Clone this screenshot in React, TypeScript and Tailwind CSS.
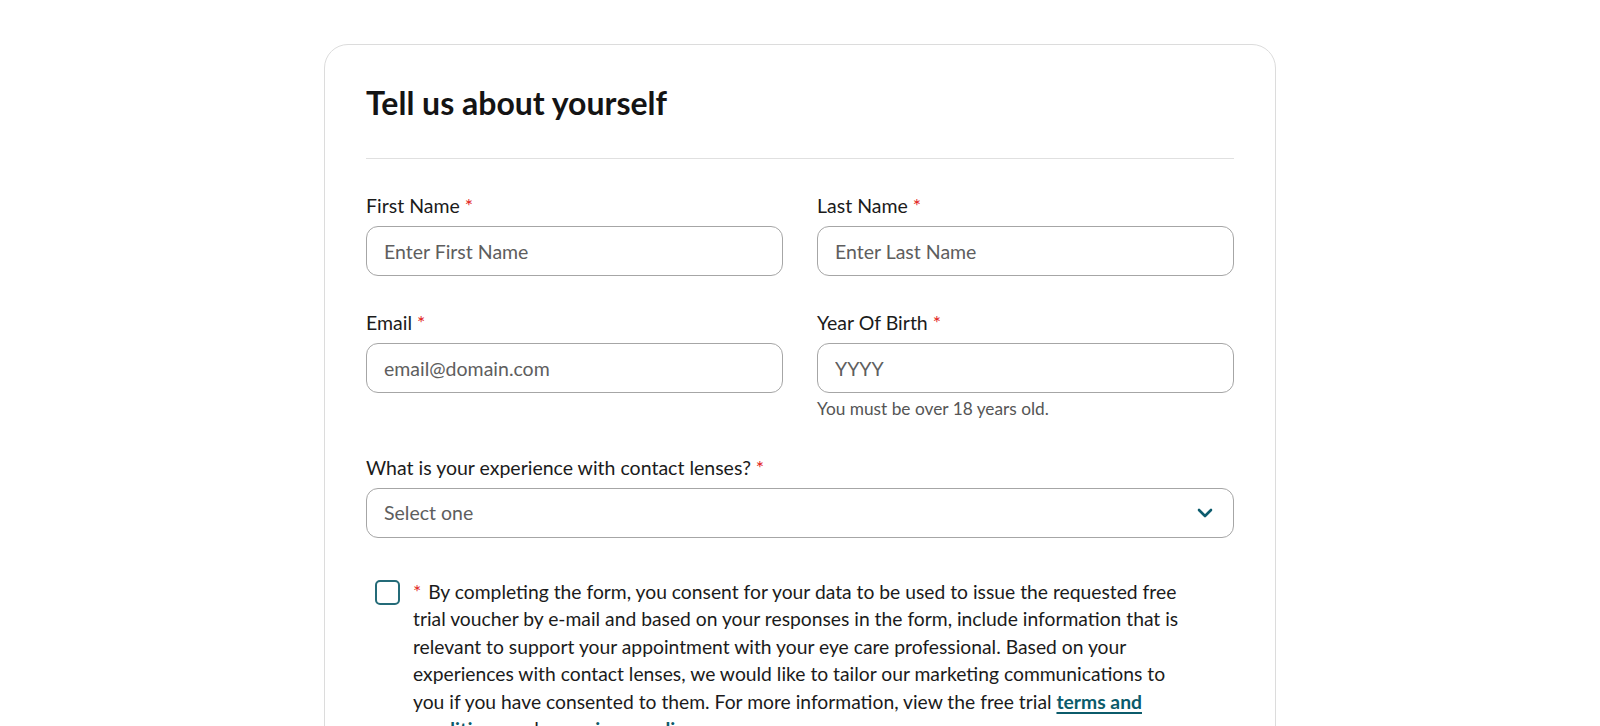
import { useState } from "react"

function Label({ text, htmlFor }: { text: string; htmlFor: string }) {
  return (
    <label htmlFor={htmlFor} className="block text-[19.5px] leading-[24px] text-[#1b1b1b]">
      {text} <span className="text-[#e2231a]">*</span>
    </label>
  )
}

const fieldClass =
  "block h-[50px] w-full rounded-[12px] border border-[#a6a6a6] bg-white px-[17px] text-[19.5px] text-[#1b1b1b] placeholder:text-[#5e5e5e] outline-none"

export default function App() {
  const [form, setForm] = useState({ firstName: "", lastName: "", email: "", year: "", experience: "" })
  const [consent, setConsent] = useState(false)

  return (
    <div className="min-h-screen bg-white font-['Lato','Liberation_Sans',sans-serif]">
      <div className="mx-auto mt-[44px] w-[952px] rounded-[24px] border border-[#dcdcdc] px-[41px] pt-[38px] pb-10">
        <h1 className="text-[32px] leading-[40px] font-bold text-[#141414]">Tell us about yourself</h1>
        <hr className="mt-[35px] border-0 border-t border-[#e0e0e0]" />

        <div className="mt-[35px] grid grid-cols-2 gap-x-[34px] gap-y-[35px]">
          <div>
            <Label text="First Name" htmlFor="firstName" />
            <input
              id="firstName"
              className={"mt-2 " + fieldClass}
              placeholder="Enter First Name"
              value={form.firstName}
              onChange={(e) => setForm({ ...form, firstName: e.target.value })}
            />
          </div>
          <div>
            <Label text="Last Name" htmlFor="lastName" />
            <input
              id="lastName"
              className={"mt-2 " + fieldClass}
              placeholder="Enter Last Name"
              value={form.lastName}
              onChange={(e) => setForm({ ...form, lastName: e.target.value })}
            />
          </div>
          <div>
            <Label text="Email" htmlFor="email" />
            <input
              id="email"
              className={"mt-2 " + fieldClass}
              placeholder="email@domain.com"
              value={form.email}
              onChange={(e) => setForm({ ...form, email: e.target.value })}
            />
          </div>
          <div>
            <Label text="Year Of Birth" htmlFor="year" />
            <input
              id="year"
              className={"mt-2 " + fieldClass}
              placeholder="YYYY"
              value={form.year}
              onChange={(e) => setForm({ ...form, year: e.target.value })}
            />
            <p className="mt-[6px] text-[17.3px] leading-[20px] text-[#555555]">You must be over 18 years old.</p>
          </div>
        </div>

        <div className="mt-[37px]">
          <Label text="What is your experience with contact lenses?" htmlFor="experience" />
          <div className="relative mt-2">
            <select
              id="experience"
              className={fieldClass + " appearance-none text-[#5e5e5e]"}
              value={form.experience}
              onChange={(e) => setForm({ ...form, experience: e.target.value })}
            >
              <option value="">Select one</option>
              <option value="new">I have never worn contact lenses</option>
              <option value="current">I currently wear contact lenses</option>
              <option value="past">I used to wear contact lenses</option>
            </select>
            <svg
              className="pointer-events-none absolute top-1/2 right-[21px] -translate-y-1/2"
              width="16"
              height="10"
              viewBox="0 0 16 10"
              fill="none"
            >
              <path d="M2 2l6 6 6-6" stroke="#0d5c6e" strokeWidth="2.6" strokeLinecap="round" strokeLinejoin="round" />
            </svg>
          </div>
        </div>

        <div className="mt-[40px] flex items-start pl-[9px]">
          <button
            type="button"
            onClick={() => setConsent(!consent)}
            className="mt-[2px] h-[25px] w-[25px] shrink-0 rounded-[5px] border-2 border-[#246b78] bg-white"
            aria-pressed={consent}
          />
          <p className="ml-[13px] max-w-[775px] text-[19.3px] leading-[27.4px] text-[#1b1b1b]">
            <span className="mr-[2px] text-[#e2231a]">*</span> By completing the form, you consent for your data to be
            used to issue the requested free trial voucher by e-mail and based on your responses in the form, include
            information that is relevant to support your appointment with your eye care professional. Based on your
            experiences with contact lenses, we would like to tailor our marketing communications to you if you have
            consented to them. For more information, view the free trial{" "}
            <a href="#" className="font-bold text-[#0b5b6b] underline decoration-2 underline-offset-[3px]">
              terms and conditions
            </a>{" "}
            and our{" "}
            <a href="#" className="font-bold text-[#0b5b6b] underline decoration-2 underline-offset-[3px]">
              privacy policy
            </a>
            .
          </p>
        </div>
      </div>
    </div>
  )
}
